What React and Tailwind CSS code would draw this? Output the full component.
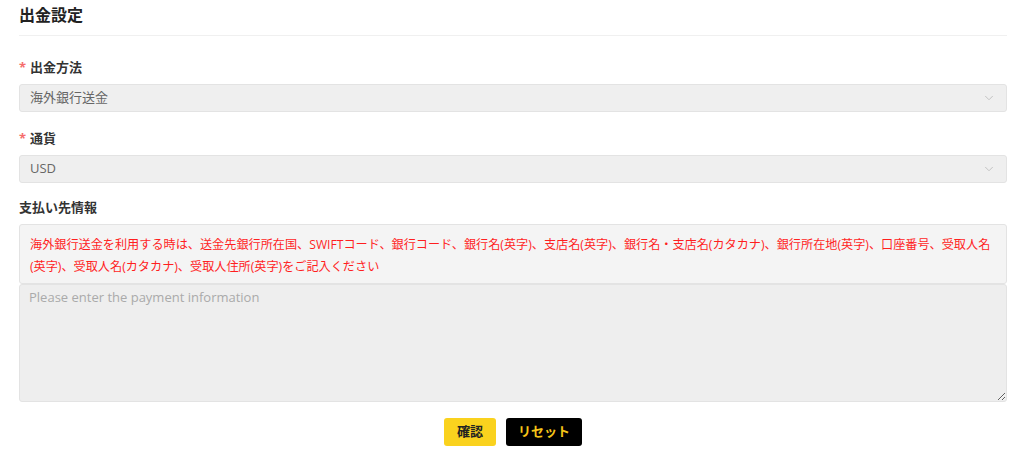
import { ChevronDown } from "lucide-react";

const font = {
  fontFamily: '"Open Sans", "Noto Sans CJK JP", sans-serif',
};

const SelectBox = ({ value }) => (
  <div className="flex items-center justify-between h-[28px] px-[10px] rounded-[3px] border border-[#e3e3e3] bg-[#efefef] text-[13px] text-[#666]">
    <span>{value}</span>
    <ChevronDown className="w-[14px] h-[14px] text-[#bbb]" strokeWidth={1.5} />
  </div>
);

const Label = ({ required, children }) => (
  <div className="flex items-center h-[20px] text-[13px] font-bold text-[#333]">
    {required && <span className="text-[#f56c6c] mr-[4px]">*</span>}
    {children}
  </div>
);

export default function App() {
  return (
    <div className="w-[1024px] h-[468px] bg-white pl-[19px] pr-[17px]" style={font}>
      <div className="pt-[4px] pb-[9px] border-b border-[#f0f0f0]">
        <h1 className="text-[16px] font-bold text-[#222] leading-[22px]">出金設定</h1>
      </div>

      <div className="mt-[22px]">
        <Label required>出金方法</Label>
        <div className="mt-[6px]">
          <SelectBox value="海外銀行送金" />
        </div>
      </div>

      <div className="mt-[17px]">
        <Label required>通貨</Label>
        <div className="mt-[6px]">
          <SelectBox value="USD" />
        </div>
      </div>

      <div className="mt-[15px]">
        <Label>支払い先情報</Label>
        <div className="mt-[6px] rounded-[3px] border border-[#e3e3e3] bg-[#f4f4f4] px-[10px] pt-[9px] pb-[5px] text-[12.15px] leading-[22px] text-[#ff1f1f]">
          海外銀行送金を利用する時は、送金先銀行所在国、SWIFTコード、銀行コード、銀行名(英字)、支店名(英字)、銀行名・支店名(カタカナ)、銀行所在地(英字)、口座番号、受取人名(英字)、受取人名(カタカナ)、受取人住所(英字)をご記入ください
        </div>
        <textarea
          className="block w-full h-[118px] rounded-[3px] border border-[#e3e3e3] bg-[#eeeeee] px-[9px] py-[3px] text-[13px] text-[#333] placeholder-[#aaa] outline-none"
          placeholder="Please enter the payment information"
        />
      </div>

      <div className="flex justify-center gap-[10px] mt-[16px]">
        <button className="w-[52px] h-[28px] rounded-[3px] bg-[#fad21e] text-[13px] font-bold text-[#222]">
          確認
        </button>
        <button className="w-[76px] h-[28px] rounded-[3px] bg-black text-[13px] font-bold text-[#f5c518]">
          リセット
        </button>
      </div>
    </div>
  );
}
